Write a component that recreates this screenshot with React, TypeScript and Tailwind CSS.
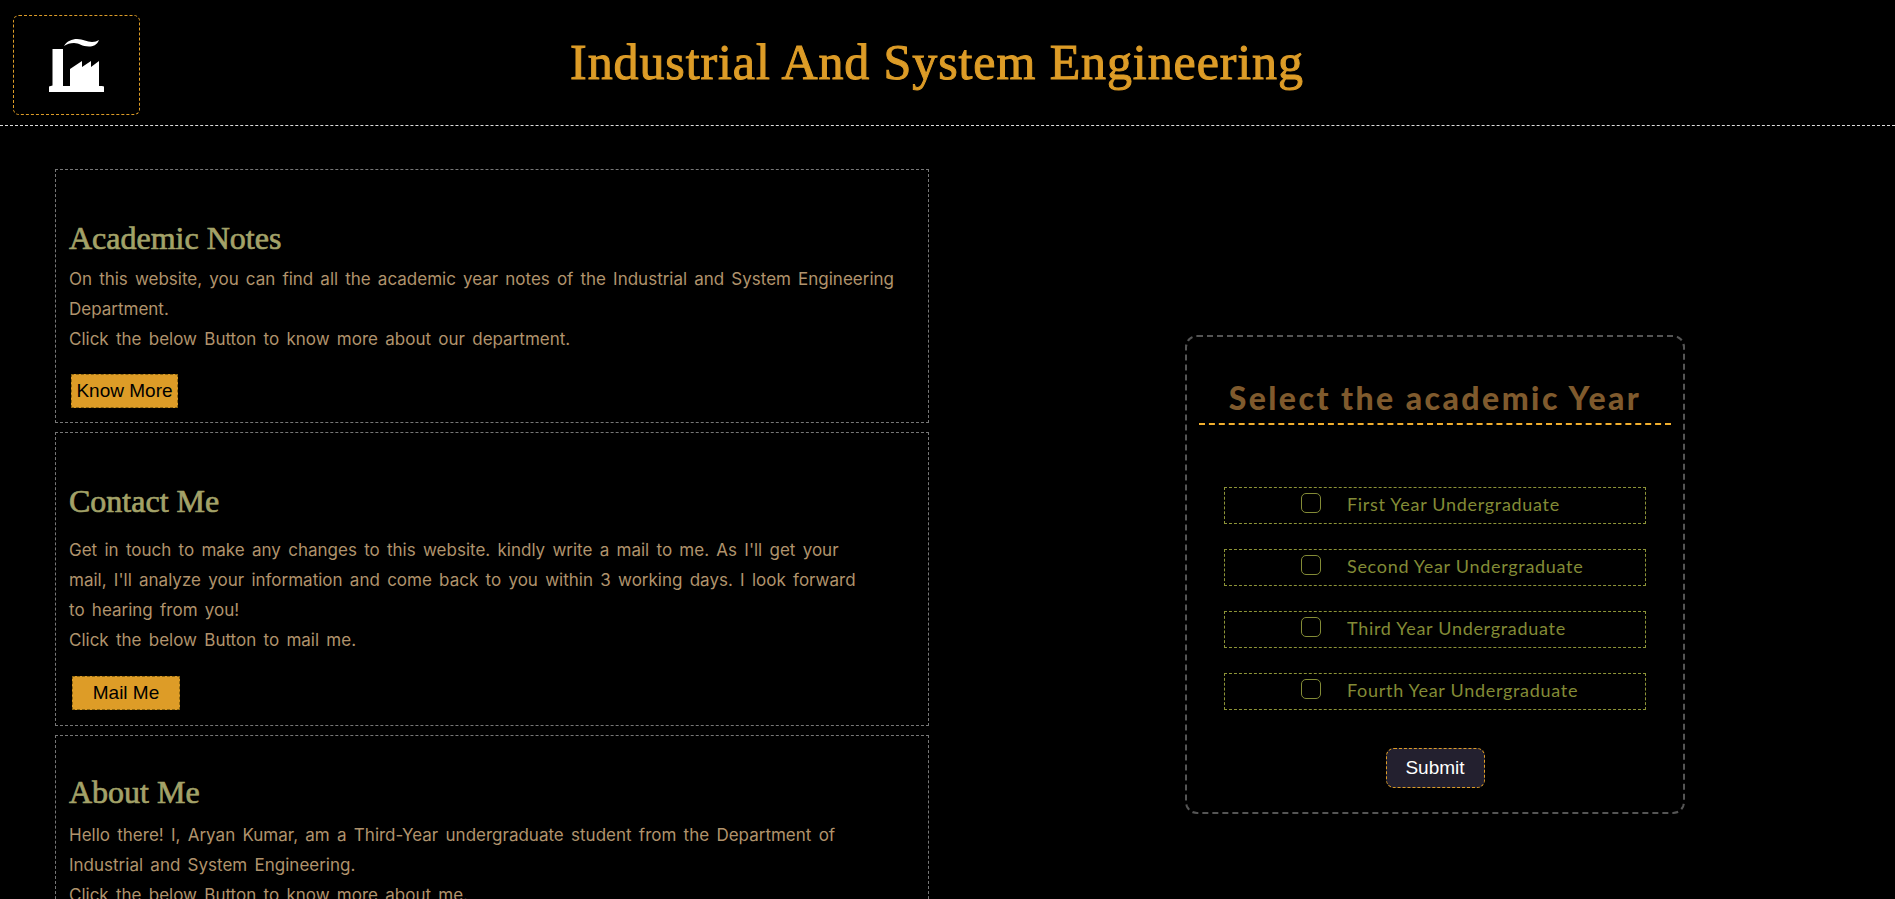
const years = ["First", "Second", "Third", "Fourth"];

const FactoryIcon = () => (
  <svg width="55" height="53" viewBox="0 0 55 53" fill="#fff">
    <path d="M0 53V47.500L3.500 46.500V10H14V47H21V30L33 22V28L42 22V28L50 22V47H53L55 47.500V53z" />
    <path d="M15 7C18 2 23 0 28 0C34 0 38 3 43 3C46 3 48 2 50 1C48 6 44 7.500 40 7.500C33 7.500 30 4 25 4C21 4 18 5 15 7z" />
  </svg>
);

const InfoCard = ({
  title,
  className,
  headClass,
  children,
  button,
  buttonClass,
}: {
  title: string;
  className: string;
  headClass: string;
  children: React.ReactNode;
  button: string;
  buttonClass: string;
}) => (
  <div className={`border border-dashed border-[#777] pl-[13px] pr-[34px] ${className}`}>
    <h2 className={`font-['Liberation_Serif',serif] text-[32px] leading-[38px] text-[#a3a268] [-webkit-text-stroke:0.7px_#a3a268] ${headClass}`}>{title}</h2>
    <div className="font-['Inter',sans-serif] text-[17px] leading-[30px] [word-spacing:2.500px] text-[#b0936c]">
      {children}
    </div>
    <button className={`block h-[34px] border border-dashed border-[#8a6410] bg-[#dd9c27] font-['Liberation_Sans',sans-serif] text-[19px] text-black ${buttonClass}`}>
      {button}
    </button>
  </div>
);

export default function App() {
  return (
    <div className="h-screen overflow-hidden bg-black">
      <header className="relative flex h-[126px] items-start border-b border-dashed border-[#ddd] pl-[13px] pt-[15px]">
        <div className="flex h-[100px] w-[127px] items-center justify-center rounded-[6px] border border-dashed border-[#dd9c27]">
          <FactoryIcon />
        </div>
        <h1 className="absolute left-0 right-[21px] top-[32px] text-center font-['Liberation_Serif',serif] text-[50px] leading-[60px] tracking-[0.9px] text-[#dd9c27] [-webkit-text-stroke:1px_#dd9c27]">
          Industrial And System Engineering
        </h1>
      </header>

      <main className="flex">
        <section className="ml-[55px] mt-[43px] flex w-[874px] shrink-0 flex-col gap-[9px]">
          <InfoCard
            title="Academic Notes"
            className="h-[254px] pt-[49px]"
            headClass="mb-[7px]"
            button="Know More"
            buttonClass="ml-[2px] mt-[20px] w-[107px]"
          >
            <p className="text-justify [word-spacing:0px]">
              On this website, you can find all the academic year notes of the Industrial and System Engineering Department.
            </p>
            <p>Click the below Button to know more about our department.</p>
          </InfoCard>
          <InfoCard
            title="Contact Me"
            className="h-[294px] pt-[49px]"
            headClass="mb-[15px]"
            button="Mail Me"
            buttonClass="ml-[3px] mt-[21px] w-[108px]"
          >
            <p>
              Get in touch to make any changes to this website. kindly write a mail to me. As I'll get your
              <br />
              mail, I'll analyze your information and come back to you within 3 working days. I look forward
              <br />
              to hearing from you!
            </p>
            <p>Click the below Button to mail me.</p>
          </InfoCard>
          <InfoCard
            title="About Me"
            className="h-[300px] pt-[37px]"
            headClass="mb-[9px]"
            button="Know More"
            buttonClass="ml-[3px] mt-[20px] w-[108px]"
          >
            <p>
              Hello there! I, Aryan Kumar, am a Third-Year undergraduate student from the Department of
              <br />
              Industrial and System Engineering.
            </p>
            <p>Click the below Button to know more about me.</p>
          </InfoCard>
        </section>

        <section className="ml-[256px] mt-[209px] flex h-[479px] w-[500px] shrink-0 flex-col items-center rounded-[12px] border-2 border-dashed border-[#555] px-[12px]">
          <h2 className="mt-[43px] h-[45px] w-full border-b-2 border-dashed border-[#f0ae2e] text-center font-['Lato',sans-serif] text-[32px] font-black leading-[36px] tracking-[2.450px] text-[#7f5a2d]">
            Select the academic Year
          </h2>
          <div className="mt-[62px] flex flex-col gap-[25px]">
            {years.map((year) => (
              <label
                key={year}
                className="flex h-[37px] w-[422px] items-start border border-dashed border-[#8d9438] pl-[76px] pt-[5px] font-['Lato',sans-serif] text-[18px] leading-[23px] tracking-[0.7px] text-[#838b36]"
              >
                <span className="h-[20px] w-[20px] rounded-[5px] border border-[#838b36]" />
                <span className="ml-[26px]">{year} Year Undergraduate</span>
              </label>
            ))}
          </div>
          <button className="mt-[38px] h-[40px] w-[99px] rounded-[8px] border border-dashed border-[#dd9c27] bg-[#23202f] font-['Liberation_Sans',sans-serif] text-[19px] text-white">
            Submit
          </button>
        </section>
      </main>
    </div>
  );
}
